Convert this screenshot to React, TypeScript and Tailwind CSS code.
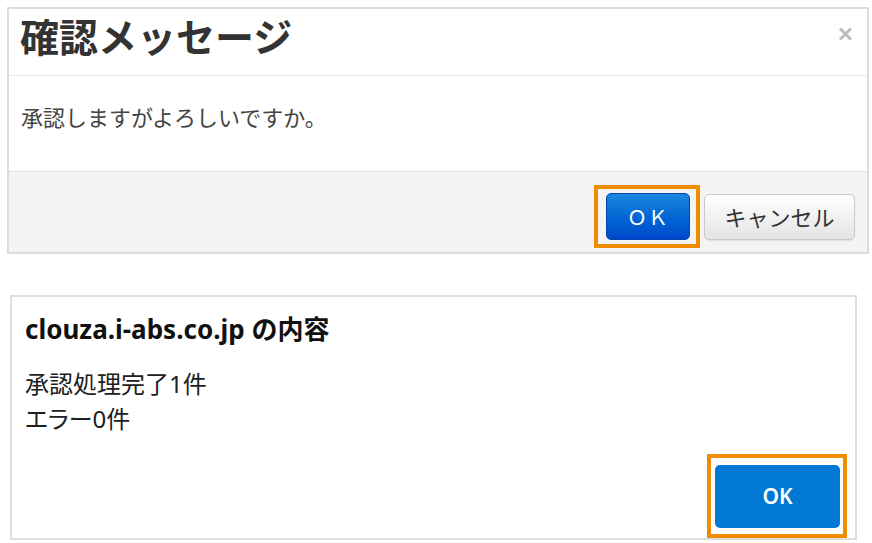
import React from "react"

const jp = "font-['Noto_Sans_CJK_JP','Noto_Sans',sans-serif]"
const ui = "font-['Noto_Sans','Noto_Sans_CJK_JP',sans-serif]"

function CloseIcon() {
  return (
    <svg width="15" height="14" viewBox="0 0 15 14" aria-hidden="true">
      <path d="M2 1.5 L13 12.5 M13 1.5 L2 12.5" stroke="#bdbdbd" strokeWidth="3" strokeLinecap="butt" />
    </svg>
  )
}

function ConfirmDialog() {
  return (
    <div className="ml-[7px] mr-[3px] mt-[7px] border-2 border-[#dcdcdc] bg-white">
      {/* Header */}
      <div className="flex h-[67px] items-start justify-between border-b border-[#e8e8e8] pl-[11px] pr-[14px] pt-[7px]">
        <h1 className={`${jp} text-[39px] font-bold leading-[39px] text-[#333333]`}>確認メッセージ</h1>
        <button className="mt-[11px]">
          <CloseIcon />
        </button>
      </div>

      {/* Body */}
      <div className="h-[96px] border-b border-[#dedede] pl-[12px] pt-[29px]">
        <p className={`${jp} text-[22px] leading-[22px] text-[#444444]`}>承認しますがよろしいですか。</p>
      </div>

      {/* Footer */}
      <div className="flex h-[80px] items-start justify-end bg-[#f4f4f4] pr-[12px] pt-[13px]">
        <div className="flex items-center gap-[4px]">
          <div className="border-4 border-[#f08c00] py-[4px] pl-[8px] pr-[6px]">
            <button
              className={`${jp} h-[47px] w-[84px] rounded-[5px] border border-[#0045b0] bg-gradient-to-b from-[#1a86dc] to-[#0048cc] text-[20px] tracking-[0.05em] text-white`}
            >
              ＯＫ
            </button>
          </div>
          <button
            className={`${jp} h-[46px] w-[151px] rounded-[5px] border border-[#c8c8c8] bg-gradient-to-b from-white to-[#e4e4e4] text-[22px] text-[#333333] shadow-[0_1px_1px_rgba(0,0,0,0.08)]`}
          >
            キャンセル
          </button>
        </div>
      </div>
    </div>
  )
}

function AlertDialog() {
  return (
    <div className="ml-[10px] mr-[15px] mt-[41px] h-[245px] border-2 border-[#dedede] bg-white">
      <div className="flex flex-col pl-[13px] pt-[16px]">
        <h2 className={`${ui} text-[26px] font-bold leading-[32px] text-[#111111]`}>clouza.i-abs.co.jp の内容</h2>
        <div
          className={`${ui} mt-[21px] text-[24px] leading-[35px] text-[#202020] [font-feature-settings:'palt']`}
        >
          <p>承認処理完了1件</p>
          <p>エラー0件</p>
        </div>
      </div>
      <div className="mt-[18px] flex justify-end pr-[8px]">
        <div className="border-4 border-[#f08c00] pb-[6px] pl-[4px] pr-[3px] pt-[7px]">
          <button
            className={`${ui} h-[63px] w-[125px] rounded-[5px] bg-[#0078d4] text-[21px] font-semibold text-white`}
          >
            OK
          </button>
        </div>
      </div>
    </div>
  )
}

export default function App() {
  return (
    <div className="h-[543px] w-[872px] overflow-hidden bg-white">
      <ConfirmDialog />
      <AlertDialog />
    </div>
  )
}
